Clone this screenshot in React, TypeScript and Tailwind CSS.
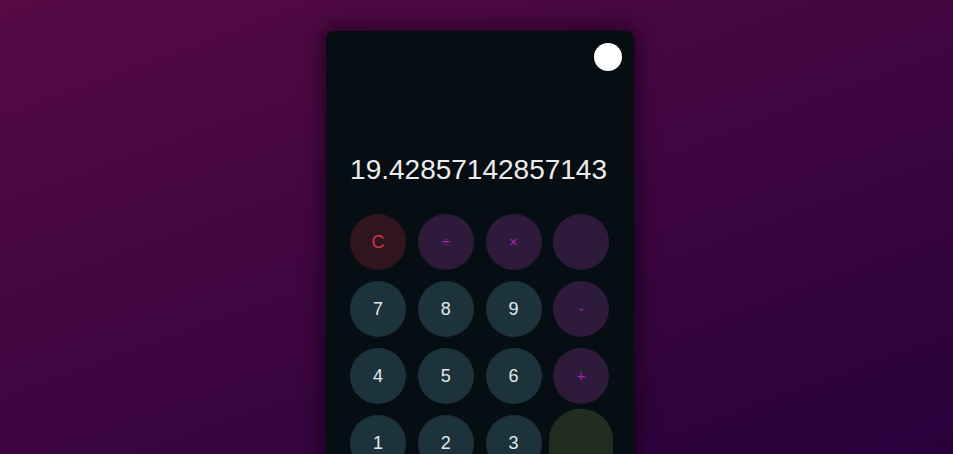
const keys = [
  { label: "C", kind: "clear" },
  { label: "÷", kind: "op" },
  { label: "×", kind: "op" },
  { label: "", kind: "op" },
  { label: "7", kind: "num" },
  { label: "8", kind: "num" },
  { label: "9", kind: "num" },
  { label: "-", kind: "op" },
  { label: "4", kind: "num" },
  { label: "5", kind: "num" },
  { label: "6", kind: "num" },
  { label: "+", kind: "op" },
  { label: "1", kind: "num" },
  { label: "2", kind: "num" },
  { label: "3", kind: "num" },
  { label: "=", kind: "equal" },
  { label: "0", kind: "num" },
  { label: ".", kind: "num" },
];

const styles: Record<string, string> = {
  num: "h-[56px] bg-[#1d333c] text-[#e3e8ea] text-[18px]",
  op: "h-[56px] bg-[#2e1a3a] text-[#b01ec0] text-[15px]",
  clear: "h-[56px] bg-[#30141e] text-[#cc3a4a] text-[18px]",
  equal: "row-span-2 bg-[#212d21] text-[#9bd06a] text-[18px] scale-x-[1.14] scale-y-[1.1]",
};

const App = () => {
  return (
    <div className="min-h-screen overflow-hidden bg-[linear-gradient(160deg,#560a46,#22003a)] font-['Liberation_Sans',Arial,sans-serif]">
      <div className="flex justify-center pl-[7px] pt-[31px]">
        <div className="w-[308px] rounded-lg bg-[#070e13] px-6 pb-6 pt-3 shadow-[0_0_18px_6px_rgba(0,0,0,0.45)]">
          <div className="-mr-3 flex justify-end">
            <button className="h-7 w-7 rounded-full bg-white" />
          </div>
          <div className="mt-[83px] pr-[3px] text-right text-[28px] leading-[32px] text-[#ececec]">
            19.42857142857143
          </div>
          <div className="mt-[28px] grid grid-cols-4 gap-[11px]">
            {keys.map((k, i) => (
              <button
                key={i}
                className={`flex w-[56px] items-center justify-center rounded-full ${styles[k.kind]}`}
              >
                {k.kind === "equal" ? "" : k.label}
              </button>
            ))}
          </div>
        </div>
      </div>
    </div>
  );
};

export default App;
